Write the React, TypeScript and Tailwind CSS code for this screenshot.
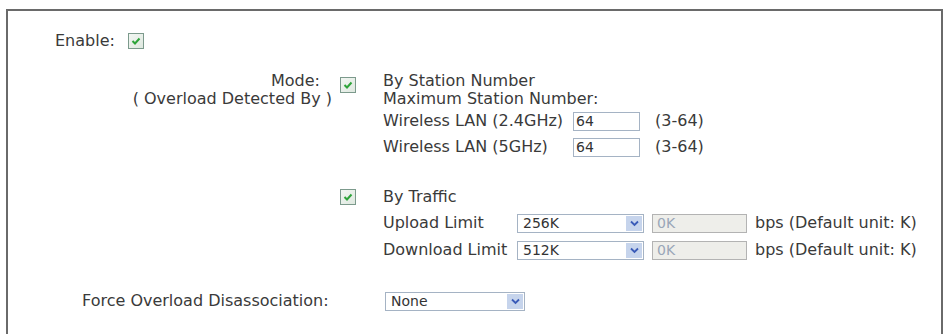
import React from 'react';

function Check() {
  return (
    <span className="inline-flex h-[16px] w-[16px] shrink-0 items-center justify-center border border-[#7c9a8c] bg-gradient-to-br from-[#f2f6f2] to-[#dfe8e0]">
      <svg width="10" height="10" viewBox="0 0 10 10">
        <path d="M1.5 5 L4 7.5 L8.5 2.5" fill="none" stroke="#2ea43a" strokeWidth="2" />
      </svg>
    </span>
  );
}

function Select({ value, width }: { value: string; width: string }) {
  return (
    <div className={`flex h-[19px] items-stretch border border-[#a5b3c4] bg-white ${width}`}>
      <span className="flex-1 pl-[5px] text-[14px] leading-[17px] text-[#333]">{value}</span>
      <span className="m-[1px] flex w-[16px] items-center justify-center bg-[#c6d4ec]">
        <svg width="9" height="7" viewBox="0 0 9 7">
          <path d="M1 1.5 L4.5 5 L8 1.5" fill="none" stroke="#3a5bb8" strokeWidth="1.8" />
        </svg>
      </span>
    </div>
  );
}

function TextBox({ value, disabled }: { value: string; disabled?: boolean }) {
  return (
    <div
      className={
        disabled
          ? 'h-[19px] w-[95px] border border-[#b3b3b3] bg-[#eeeeea] pl-[4px] text-[14px] leading-[17px] text-[#9aa6b8]'
          : 'h-[19px] w-[67px] border border-[#a5b3c4] bg-white pl-[2px] text-[14px] leading-[17px] text-[#333]'
      }
    >
      {value}
    </div>
  );
}

export default function App() {
  return (
    <div
      className="h-[334px] w-[946px] overflow-hidden bg-white pl-[6px] pt-[9px] text-[16px] text-[#3a3a3a]"
      style={{ fontFamily: '"DejaVu Sans", Verdana, sans-serif' }}
    >
      <div className="h-[330px] w-[937px] border-2 border-b-0 border-[#6a6a6a]">
        {/* Enable */}
        <div className="mt-[20px] flex h-[20px] items-center pl-[47px]">
          <span className="w-[73px]">Enable:</span>
          <Check />
        </div>

        {/* Mode: by station */}
        <div className="mt-[21px] flex">
          <div className="flex w-[324px] flex-col items-end leading-[18px]">
            <span className="pr-[12px]">Mode:</span>
            <span>( Overload Detected By )</span>
          </div>
          <div className="ml-[8px] w-[17px] pt-[1px]">
            <Check />
          </div>
          <div className="ml-[26px] flex flex-col leading-[18px]">
            <span>By Station Number</span>
            <span>Maximum Station Number:</span>
            <div className="mt-[3px] flex h-[20px] items-center">
              <span className="w-[190px]">Wireless LAN (2.4GHz)</span>
              <TextBox value="64" />
              <span className="ml-[15px]">(3-64)</span>
            </div>
            <div className="mt-[6px] flex h-[20px] items-center">
              <span className="w-[190px]">Wireless LAN (5GHz)</span>
              <TextBox value="64" />
              <span className="ml-[15px]">(3-64)</span>
            </div>
          </div>
        </div>

        {/* By traffic */}
        <div className="mt-[31px] flex">
          <div className="ml-[332px] flex h-[18px] w-[17px] items-center">
            <Check />
          </div>
          <div className="ml-[26px] flex flex-col">
            <span className="h-[18px] leading-[18px]">By Traffic</span>
            <div className="mt-[7px] flex h-[20px] items-center">
              <span className="w-[134px]">Upload Limit</span>
              <Select value="256K" width="w-[127px]" />
              <span className="ml-[8px]">
                <TextBox value="0K" disabled />
              </span>
              <span className="ml-[8px]">bps (Default unit: K)</span>
            </div>
            <div className="mt-[7px] flex h-[20px] items-center">
              <span className="w-[134px]">Download Limit</span>
              <Select value="512K" width="w-[127px]" />
              <span className="ml-[8px]">
                <TextBox value="0K" disabled />
              </span>
              <span className="ml-[8px]">bps (Default unit: K)</span>
            </div>
          </div>
        </div>

        {/* Force */}
        <div className="mt-[31px] flex h-[20px] items-center pl-[74px]">
          <span className="w-[303px]">Force Overload Disassociation:</span>
          <Select value="None" width="w-[140px]" />
        </div>
      </div>
    </div>
  );
}
